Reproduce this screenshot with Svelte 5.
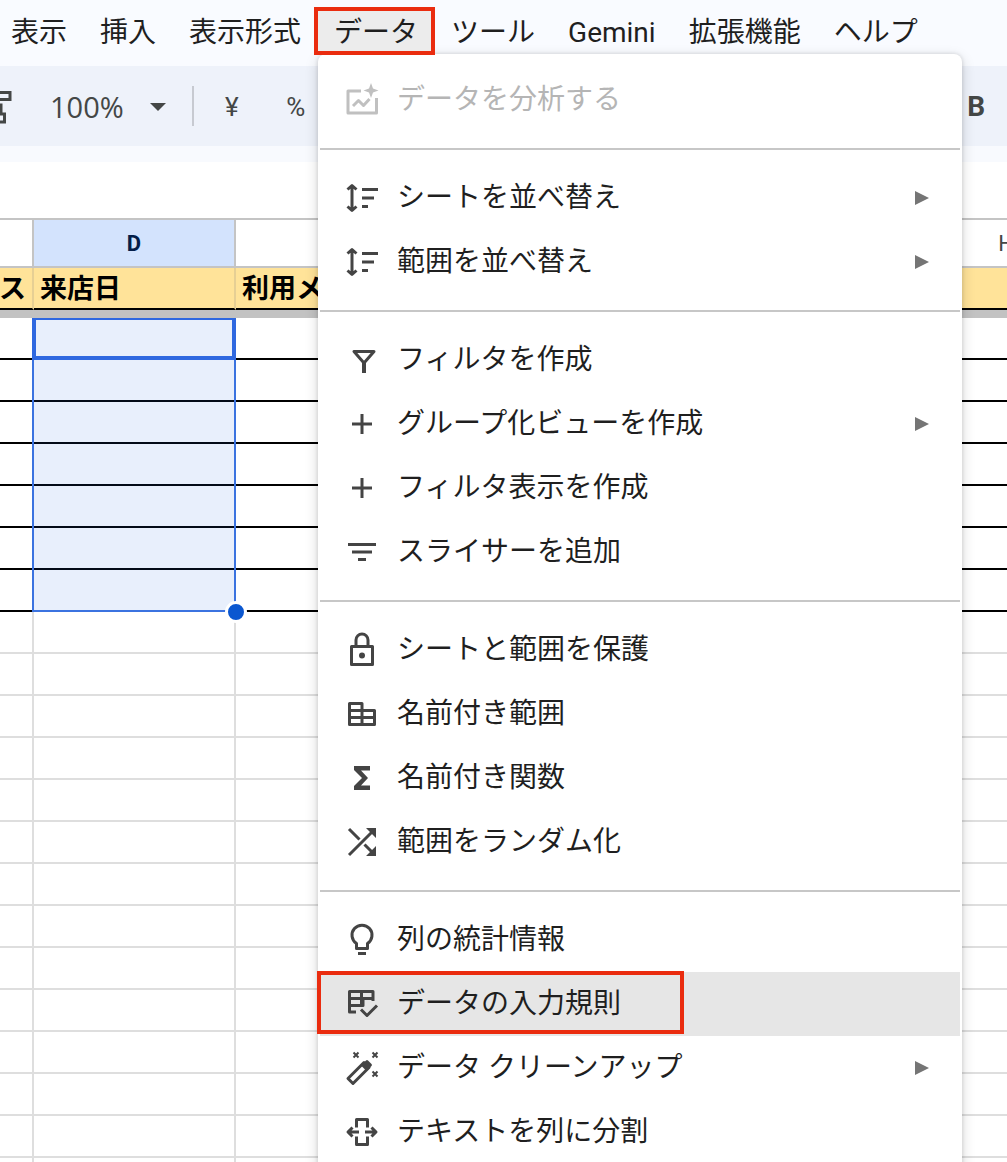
<script>
  const menus = ['表示', '挿入', '表示形式', 'データ', 'ツール', 'Gemini', '拡張機能', 'ヘルプ'];
  const openMenu = 'データ';

  const groups = [
    [{ icon: 'analyze', label: 'データを分析する', disabled: true }],
    [
      { icon: 'sort', label: 'シートを並べ替え', submenu: true },
      { icon: 'sort', label: '範囲を並べ替え', submenu: true },
    ],
    [
      { icon: 'filter', label: 'フィルタを作成' },
      { icon: 'plus', label: 'グループ化ビューを作成', submenu: true },
      { icon: 'plus', label: 'フィルタ表示を作成' },
      { icon: 'slicer', label: 'スライサーを追加' },
    ],
    [
      { icon: 'lock', label: 'シートと範囲を保護' },
      { icon: 'ranges', label: '名前付き範囲' },
      { icon: 'sigma', label: '名前付き関数' },
      { icon: 'shuffle', label: '範囲をランダム化' },
    ],
    [
      { icon: 'bulb', label: '列の統計情報' },
      { icon: 'validation', label: 'データの入力規則', active: true },
      { icon: 'wand', label: 'データ クリーンアップ', submenu: true },
      { icon: 'split', label: 'テキストを列に分割' },
    ],
  ];

  /* `line` paths are stroked, `fill` paths are filled. All on a 36px grid. */
  const icons = {
    analyze: {
      line: 'M17 9H4v22h28.500V16M9 24l5.500-5.500 5 5 6-6.500',
      fill: 'M27 1l2 5.500L34.500 8.500 29 10.500 27 16l-2-5.500L19.500 8.500 25 6.500z',
    },
    sort: {
      line: 'M8 6v24M3.500 9.500L8 5.500l4.500 4M3.500 26.500L8 30.500l4.500-4M18 9.500h16M18 18h12M18 26.500h6',
    },
    filter: { line: 'M10 9.500h20L20 21z', fill: 'M18 19h4v12h-4z' },
    plus: { line: 'M18 8v20M8 18h20' },
    slicer: { line: 'M4 10.500h28M8 18h20M14 25.500h8' },
    lock: {
      line: 'M7.500 14.500h21v18h-21zM12 14V8a6 6 0 0 1 12 0v6',
      fill: 'M18 20.500a3 3 0 1 1 0 6 3 3 0 0 1 0-6z',
    },
    ranges: { line: 'M5.500 7.500H18v21H5.500zM18 14.500h12.500v14H18M5.500 14.500H18M5.500 21.500h25' },
    sigma: { fill: 'M10 6h16v4.500h-9l7 7.500-7 7.500h9V30H10v-4l8-8-8-8z' },
    shuffle: {
      line: 'M5 31L30 6M5 5l10.500 10.500M20.500 20.500L30 30',
      fill: 'M22 4h10v10zM32 22v10H22z',
    },
    bulb: { line: 'M12.500 21.500a10 10 0 1 1 11 0v5h-11zM14 31.500h8' },
    validation: {
      line: 'M29 15V5.500H5.500V26H12M5.500 12.500H29V15M17.500 5.500v14M5.500 19.500h13.500V14M17 23.500l6 6 10-10',
    },
    wand: {
      line: 'M4 28.500L20 12.500l5 5L9 33.500z',
      fill: 'M17 15.500L22 10.500q1-1 2 0l3.500 3.500q1 1 0 2L22.500 21z',
      stars: 'M9.500 2.500l5 5M14.500 2.500l-5 5M28.500 2.500l5 5M33.500 2.500l-5 5M28.500 21.500l5 5M33.500 21.500l-5 5',
    },
    split: {
      line: 'M12.500 13.500v-8h11v8M12.500 22.500v8h11v-8M4 18h11M21 18h11M8.500 13.500L4 18l4.500 4.500M27.500 13.500L32 18l-4.500 4.500',
    },
  };

  const borderedRows = Array(7);
  const plainRows = Array(14);
</script>

<div class="app">
  <nav class="menubar">
    {#each menus as menu}
      <button class="menu-button" class:open={menu === openMenu}>
        {menu}
        {#if menu === openMenu}
          <span class="marker"></span>
        {/if}
      </button>
    {/each}
  </nav>

  <div class="toolbar">
    <button class="paint" aria-label="書式を貼り付け">
      <svg width="12" height="36" viewBox="0 0 12 36" fill="none" stroke="currentColor" stroke-width="3">
        <path d="M0 3.500h10v7H0M0 16h1v9M0 25h4.500v8H0" />
      </svg>
    </button>
    <button class="zoom">
      100%
      <svg width="16" height="8" viewBox="0 0 16 8" fill="currentColor">
        <path d="M0 0h16L8 8z" />
      </svg>
    </button>
    <span class="divider"></span>
    <button class="format">¥</button>
    <button class="format">%</button>
    <button class="bold">B</button>
  </div>

  <div class="formula-bar"></div>

  <div class="sheet">
    <table>
      <colgroup>
        <col class="col-c" />
        <col class="col-d" />
        <col class="col-wide" />
        <col class="col-d" />
      </colgroup>
      <thead>
        <tr class="letters">
          <th></th>
          <th class="current">D</th>
          <th></th>
          <th>H</th>
        </tr>
        <tr class="titles">
          <th class="cut">ス</th>
          <th>来店日</th>
          <th>利用メ</th>
          <th></th>
        </tr>
        <tr class="frozen"><td colspan="4"></td></tr>
      </thead>
      <tbody>
        {#each borderedRows as _}
          <tr class="bordered"><td></td><td></td><td></td><td></td></tr>
        {/each}
        {#each plainRows as _}
          <tr><td></td><td></td><td></td><td></td></tr>
        {/each}
      </tbody>
    </table>
    <div class="selection">
      <div class="active-cell"></div>
      <span class="handle"></span>
    </div>
  </div>

  <div class="menu" role="menu">
    {#each groups as group}
      <div class="group" role="group">
        {#each group as item}
          <button class="item" class:active={item.active} role="menuitem" disabled={item.disabled}>
            <svg class="icon" width="36" height="36" viewBox="0 0 36 36">
              {#if icons[item.icon].line}
                <path class="line" d={icons[item.icon].line} />
              {/if}
              {#if icons[item.icon].fill}
                <path d={icons[item.icon].fill} fill="currentColor" />
              {/if}
              {#if icons[item.icon].stars}
                <path class="line thin" d={icons[item.icon].stars} />
              {/if}
            </svg>
            <span class="label">{item.label}</span>
            {#if item.submenu}
              <svg class="arrow" width="14" height="14" viewBox="0 0 14 14" fill="currentColor">
                <path d="M0 0l14 7-14 7z" />
              </svg>
            {/if}
            {#if item.active}
              <span class="marker"></span>
            {/if}
          </button>
        {/each}
      </div>
    {/each}
  </div>
</div>

<style>
  :global(body) {
    margin: 0;
  }

  .app {
    position: relative;
    height: 100vh;
    overflow: hidden;
    font-family: Roboto, 'Noto Sans CJK JP', sans-serif;
    color: #1f1f1f;
    background: #fff;
  }

  button {
    padding: 0;
    font: inherit;
    color: inherit;
    text-align: left;
    background: none;
    border: 0;
  }

  .marker {
    position: absolute;
    border: 4px solid #ea2c0f;
  }

  /* Menu bar */

  .menubar {
    display: flex;
    gap: 1px;
    align-items: flex-start;
    box-sizing: border-box;
    height: 66px;
    padding: 8px 0 0;
    margin-left: -5px;
    background: #f9fbff;
  }

  .menu-button {
    position: relative;
    flex: none;
    height: 46px;
    padding: 0 16px;
    font-size: 28px;
    line-height: 50px;
    white-space: nowrap;
  }

  .menu-button.open {
    z-index: 3;
    background: #ececec;
  }

  .menu-button .marker {
    inset: -1px -1px -1px -4px;
  }

  /* Toolbar */

  .toolbar {
    display: flex;
    align-items: center;
    height: 80px;
    padding-right: 22px;
    font-size: 28px;
    font-weight: 500;
    line-height: 42px;
    color: #444746;
    background: #eef2fa;
  }

  .toolbar button {
    padding-top: 2px;
  }

  .paint {
    display: flex;
    margin-right: 38px;
  }

  .zoom {
    display: flex;
    gap: 26px;
    align-items: center;
    font-family: 'Open Sans', sans-serif;
    font-size: 29px;
  }

  .divider {
    width: 2px;
    height: 40px;
    margin-left: 26px;
    background: #c7cad1;
  }

  .format {
    width: 64px;
    font-size: 26px;
    font-weight: 400;
    text-align: center;
  }

  .divider + .format {
    margin-left: 6px;
  }

  .bold {
    margin-left: auto;
    font-weight: 700;
  }

  .formula-bar {
    height: 56px;
    border-top: 16px solid #f8fafe;
  }

  /* Sheet */

  .sheet {
    position: relative;
  }

  table {
    width: 1108px;
    table-layout: fixed;
    border-spacing: 0;
    border-top: 2px solid #c4c4c4;
  }

  .col-c {
    width: 34px;
  }

  .col-d {
    width: 202px;
  }

  th,
  td {
    box-sizing: border-box;
    height: 42px;
    padding: 0;
    overflow: hidden;
    white-space: nowrap;
    border-right: 2px solid #dedede;
    border-bottom: 2px solid #dedede;
  }

  .letters th {
    height: 48px;
    font-size: 22px;
    font-weight: 400;
    color: #444746;
    border-color: #c4c4c4;
  }

  .letters .current {
    font-weight: 700;
    color: #041e49;
    background: #d3e3fd;
  }

  .titles th {
    padding: 2px 6px 0;
    font-size: 27px;
    line-height: 38px;
    color: #000;
    text-align: left;
    background: #ffe399;
    border-right-color: #e6cf94;
    border-bottom-color: #000;
  }

  .titles .cut {
    padding-right: 8px;
    direction: rtl;
  }

  .frozen td {
    height: 8px;
    background: #c2c2c2;
    border: 0;
  }

  .bordered td {
    border-bottom-color: #000;
  }

  .selection {
    position: absolute;
    top: 100px;
    left: 32px;
    box-sizing: border-box;
    width: 204px;
    height: 294px;
    background: rgba(26, 95, 225, 0.1);
    border: 2px solid #3b73e0;
  }

  .active-cell {
    box-sizing: border-box;
    height: 42px;
    margin: -2px;
    border: solid #2f68e0;
    border-width: 2px 4px 4px;
  }

  .handle {
    position: absolute;
    right: -13px;
    bottom: -13px;
    width: 16px;
    height: 16px;
    background: #0b57d0;
    border: 3px solid #fff;
    border-radius: 50%;
  }

  /* Drop-down */

  .menu {
    position: absolute;
    top: 54px;
    left: 318px;
    z-index: 2;
    box-sizing: border-box;
    width: 644px;
    padding: 14px 2px;
    background: #fff;
    border-radius: 8px;
    box-shadow:
      0 0 4px rgba(0, 0, 0, 0.14),
      0 4px 14px rgba(0, 0, 0, 0.16);
  }

  .group + .group {
    padding-top: 16px;
    margin-top: 16px;
    border-top: 2px solid #c7c7c7;
  }

  .item {
    position: relative;
    display: flex;
    gap: 17px;
    align-items: center;
    width: 100%;
    height: 64px;
    padding: 0 31px 0 24px;
    font-size: 28px;
    line-height: 40px;
  }

  .item:disabled {
    color: #b5b5b5;
  }

  .item.active {
    background: #e6e6e6;
  }

  .item .marker {
    inset: -1px 276px 2px -3px;
  }

  .icon {
    flex: none;
    color: #444;
  }

  .item:disabled .icon {
    color: #c0c0c0;
  }

  .line {
    fill: none;
    stroke: currentColor;
    stroke-width: 3px;
    stroke-linejoin: round;
  }

  .line.thin {
    stroke-width: 2px;
  }

  .label {
    flex: auto;
    white-space: nowrap;
  }

  .arrow {
    color: #757575;
  }
</style>
